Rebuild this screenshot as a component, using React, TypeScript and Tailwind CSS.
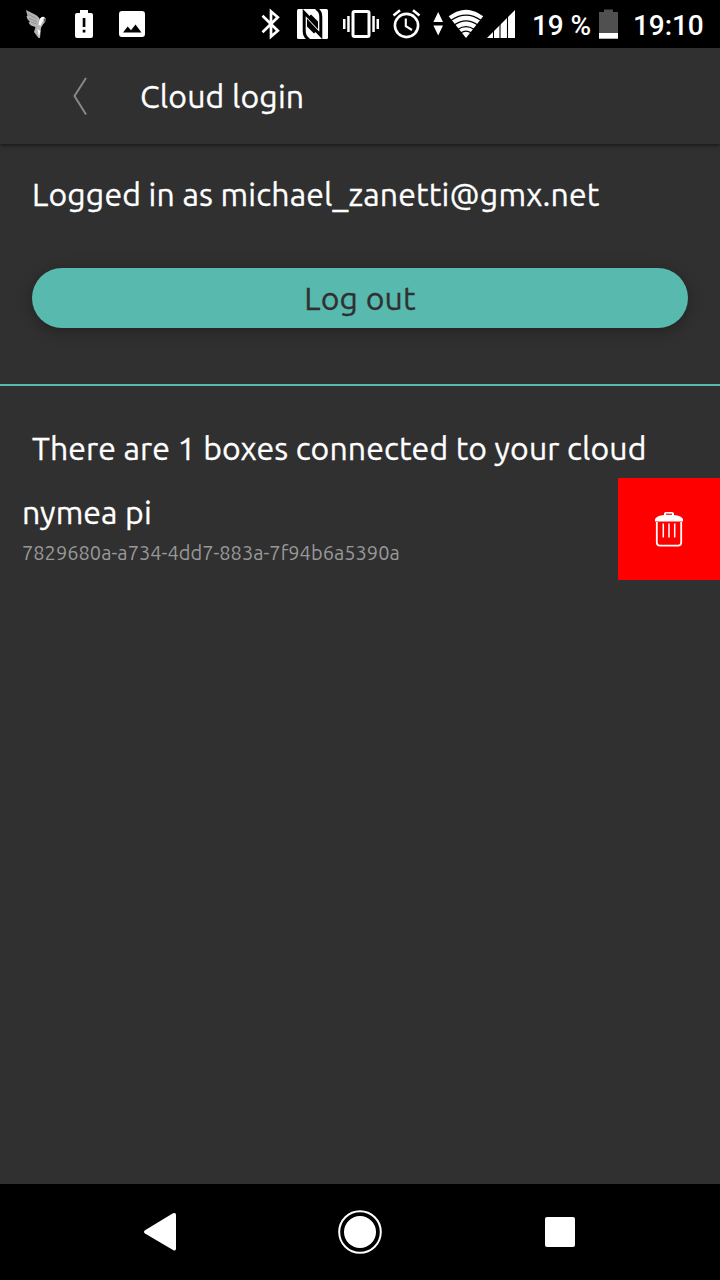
import type { ReactNode } from "react";

const uiFont = "font-['Ubuntu','Noto_Sans',sans-serif]";

function StatusIcon({ box, className, children }: { box: string; className: string; children: ReactNode }) {
  return (
    <svg viewBox={box} className={`h-8 shrink-0 ${className}`} fill="#fff" aria-hidden="true">
      {children}
    </svg>
  );
}

function StatusBar() {
  return (
    <header className="flex h-12 w-full shrink-0 items-center bg-black pl-6 text-white font-['Roboto',sans-serif]">
      <StatusIcon box="24 8 24 32" className="w-6">
        <path d="M26 10L35 14.5Q39.5 17 40 20L41.5 17.3Q44 15.5 46 19L45 22Q43 24 41 28L40 38H38.5L34 32L35.5 27Q30 26 28.5 22.5L30 22Q26.5 19 26.5 16L27.5 16Z" fill="#b4b4b4" />
        <path d="M28 14L36 18.5M29 18.5L37 21.5M31 22L37 24" fill="none" stroke="#8a8a8a" strokeWidth="0.8" />
        <path d="M40 18.5Q43 15.5 44.5 18L42.5 21.5L40.5 26L38.5 24.5Z" />
        <path d="M37.5 29L39 37L40.3 31Z" />
        <path d="M43.5 18.5L46 19L44.5 22Z" fill="#555" />
      </StatusIcon>
      <StatusIcon box="75 8 18 32" className="ml-[27px] w-[18px]">
        <path fillRule="evenodd" d="M80 10H88V13H91Q93 13 93 15V36Q93 38 91 38H77Q75 38 75 36V15Q75 13 77 13H80ZM82.7 18V27H85.4V18ZM82.7 29.7V32.6H85.4V29.7Z" />
      </StatusIcon>
      <StatusIcon box="119 8 26 32" className="ml-[26px] w-[26px]">
        <path fillRule="evenodd" d="M122 11H142Q145 11 145 14V34Q145 37 142 37H122Q119 37 119 34V14Q119 11 122 11ZM123 32.5H141.5L135.5 24.5L131 30.2L127.7 26.4Z" />
      </StatusIcon>
      <StatusIcon box="260 8 22 32" className="ml-[115px] w-[22px]">
        <path d="M262.5 15.8L277.8 30.8L271 36.6V11.4L277.8 17.2L262.5 32.2" fill="none" stroke="#fff" strokeWidth="2.7" />
      </StatusIcon>
      <StatusIcon box="297 8 31 32" className="ml-[15px] w-[31px]">
        <rect x="297" y="9" width="31" height="30" rx="1.5" />
        <g fill="none" stroke="#000" strokeWidth="3">
          <path d="M309 39.5Q304.2 37 304.2 31V12.5L316.5 25.5V22L310 15.5" />
          <path d="M316 8.5Q320.8 11 320.8 17V35.5L308.5 22.5V26L315 32.5" />
        </g>
      </StatusIcon>
      <StatusIcon box="343 8 36 32" className="ml-[15px] w-9">
        <rect x="353" y="11.5" width="16" height="25" rx="1.5" fill="none" stroke="#fff" strokeWidth="3" />
        <path d="M343 19H345.5V29H343ZM347.2 16H349.7V32H347.2ZM372.3 16H374.8V32H372.3ZM376.5 19H379V29H376.5Z" />
      </StatusIcon>
      <StatusIcon box="392 8 29 32" className="ml-[13px] w-[29px]">
        <g fill="none" stroke="#fff" strokeWidth="2.6">
          <circle cx="406.5" cy="25.5" r="11.6" />
          <path d="M393.5 15.6L400 10.2M413 10.2L419.5 15.6" />
          <path d="M405.8 18.5V26.2L412 30" strokeWidth="2.1" />
        </g>
      </StatusIcon>
      <StatusIcon box="433 8 10 32" className="ml-3 w-[10px]">
        <path d="M438.2 12L443 22H433.4ZM433.4 25.5H443L438.2 35.5Z" />
      </StatusIcon>
      <StatusIcon box="448 8 36 32" className="ml-[5px] w-9">
        <path d="M448.7 16.2Q466 3.2 483.2 16.2L466 38Z" />
        <g fill="none" stroke="#000" strokeWidth="1.2">
          <path d="M451 20.3Q466 9.8 481 20.3" />
          <path d="M454.5 24.8Q466 17 477.5 24.8" />
          <path d="M458 29.2Q466 24 474 29.2" />
          <path d="M461 32.8Q466 29.5 471 32.8" />
        </g>
      </StatusIcon>
      <StatusIcon box="487 8 28 32" className="ml-[3px] w-7">
        <path d="M487 38L515 10V38Z" />
        <path d="M493.5 20V38M500 14V38M507.5 10V38" stroke="#000" strokeWidth="1.1" />
      </StatusIcon>
      <span className="ml-[17px] w-[59px] whitespace-nowrap pt-[3px] text-[28px] leading-8 font-medium tracking-[-0.1px]">19 %</span>
      <StatusIcon box="599 8 19 32" className="ml-2 w-[19px]">
        <path d="M604 9.5H613V12H618V33H599V12H604Z" fill="#505050" />
        <path d="M599 33H618V38.7H599Z" />
      </StatusIcon>
      <span className="ml-[15px] whitespace-nowrap pt-[3px] text-[28px] leading-8 font-medium tracking-[-0.1px]">19:10</span>
    </header>
  );
}

function TrashIcon() {
  return (
    <svg viewBox="654 510 30 38" className="h-[38px] w-[30px]" fill="none" stroke="#fff" aria-hidden="true">
      <path d="M656.8 522V542.5Q656.8 545.7 660 545.7H678Q681.2 545.7 681.2 542.5V522" strokeWidth="1.8" />
      <path d="M655 521.5V519Q657 515.5 664 515V513.5Q664 512 666 512H672Q674 512 674 513.5V515Q681 515.5 683 519V521.5Z" fill="#fff" stroke="none" />
      <path d="M666 514.2H672" stroke="#ff0000" strokeWidth="1.2" />
      <path d="M663.3 523.5V537.5M669 523.5V537.5M674.7 523.5V537.5" strokeWidth="1.5" />
    </svg>
  );
}

export default function App() {
  return (
    <div className={`flex h-[1280px] w-[720px] flex-col overflow-hidden bg-[#303030] text-white ${uiFont}`}>
      <StatusBar />
      <div className="flex h-24 shrink-0 items-center pl-[72px] shadow-[0_1px_4px_rgba(0,0,0,0.65)]">
        <svg viewBox="72 76 16 40" className="h-10 w-4" fill="none" stroke="#888" strokeWidth="2" aria-label="Back">
          <path d="M86 78L74.5 96L86 114.5" />
        </svg>
        <h1 className="ml-[52px] text-[32px] leading-10 tracking-[0.15px] [-webkit-text-stroke:0.3px_currentColor]">Cloud login</h1>
      </div>
      <main className="flex grow flex-col [-webkit-text-stroke:0.3px_currentColor]">
        <p className="mt-[30px] mb-0.5 ml-8 text-[32px] leading-10 whitespace-nowrap tracking-[0.15px]">Logged in as michael_zanetti@gmx.net</p>
        <button className="mx-8 mt-[52px] flex h-[60px] shrink-0 items-center justify-center rounded-full bg-[#58b9ae] text-[32px] text-[#303030] shadow-[0_3px_16px_rgba(0,0,0,0.3)]">
          <span className="tracking-[0.15px]">Log out</span>
        </button>
        <div className="mt-14 h-0.5 shrink-0 bg-[#58b9ae]" />
        <p className="mt-[42px] mb-0.5 ml-8 text-[32px] leading-10 whitespace-nowrap tracking-[0.12px]">There are 1 boxes connected to your cloud</p>
        <div className="mt-2 flex h-[102px] shrink-0 justify-between">
          <div className="flex flex-col pt-3.5 pl-[22px]">
            <span className="text-[32px] leading-10 tracking-[0.1px]">nymea pi</span>
            <span className="mt-[7px] text-[20px] leading-7 tracking-[0.03px] text-[#989898] [-webkit-text-stroke:0px]">7829680a-a734-4dd7-883a-7f94b6a5390a</span>
          </div>
          <button className="flex w-[102px] items-center justify-center bg-[#ff0000]" aria-label="Remove">
            <TrashIcon />
          </button>
        </div>
      </main>
      <nav className="flex h-24 shrink-0 items-center bg-black pl-36">
        <svg viewBox="144 1212 32 40" className="h-10 w-8" fill="#fff" aria-label="Back">
          <path d="M145 1230.3L173 1213.3Q176 1212 176 1215V1248.5Q176 1251.5 173 1250L145 1233.5Q143 1232 145 1230.3Z" />
        </svg>
        <svg viewBox="338 1210 44 44" className="ml-[162px] size-11" aria-label="Home">
          <circle cx="360" cy="1232" r="20.8" fill="none" stroke="#fff" strokeWidth="2" />
          <circle cx="360" cy="1232" r="16" fill="#fff" />
        </svg>
        <div className="ml-[163px] size-[30px] rounded-[2px] bg-white" />
      </nav>
    </div>
  );
}
